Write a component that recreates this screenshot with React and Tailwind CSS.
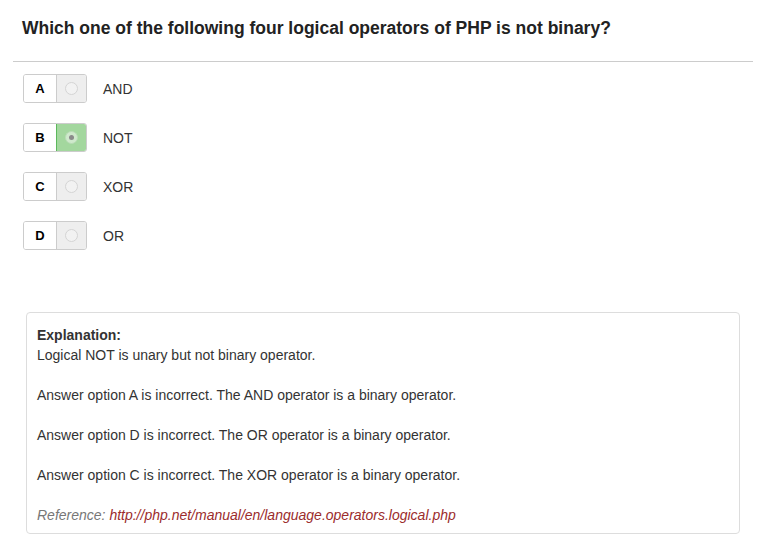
import { useState } from "react"

const options = [
  { key: "A", label: "AND" },
  { key: "B", label: "NOT" },
  { key: "C", label: "XOR" },
  { key: "D", label: "OR" },
]

export default function App() {
  const [picked, setPicked] = useState("B")

  return (
    <div className="min-h-screen bg-white text-[#333] font-['Liberation_Sans',Arial,sans-serif] text-[14px] leading-[20px]">
      {/* QUESTION */}
      <div className="px-[22px] pt-[17px] pb-[22px]">
        <h1 className="text-[17.5px] leading-[22px] font-bold text-[#222]">
          Which one of the following four logical operators of PHP is not binary?
        </h1>
      </div>
      <div className="mx-[13px] w-[740px] border-t border-[#ccc]" />

      {/* OPTIONS */}
      <div className="pl-[23px] pt-[12px] flex flex-col gap-[20px]">
        {options.map((o) => (
          <div key={o.key} className="flex items-center h-[29px]">
            <div
              onClick={() => setPicked(o.key)}
              className="flex h-[29px] cursor-pointer rounded-[3px] border border-[#ccc] overflow-hidden"
            >
              <div className="w-[32px] flex items-center justify-center bg-white text-[13px] font-bold text-black">
                {o.key}
              </div>
              <div
                className={`w-[30px] flex items-center justify-center border-l ${
                  picked === o.key
                    ? "bg-[#a3d79e] border-[#5cb85c]"
                    : "bg-[#eee] border-[#ccc]"
                }`}
              >
                <span
                  className={`w-[13px] h-[13px] rounded-full border flex items-center justify-center ${
                    picked === o.key ? "border-[#b9dcb6] bg-[#cfe9cc]" : "border-[#d4d4d4] bg-[#f2f2f2]"
                  }`}
                >
                  {picked === o.key && <span className="w-[5px] h-[5px] rounded-full bg-[#8a8a8a]" />}
                </span>
              </div>
            </div>
            <span className="ml-[16px] text-[14px] text-[#333]">{o.label}</span>
          </div>
        ))}
      </div>

      {/* EXPLANATION */}
      <div className="ml-[26px] mt-[62px] w-[714px] h-[222px] rounded-[4px] border border-[#ddd] px-[10px] pt-[12px]">
        <div className="font-bold">Explanation:</div>
        <div>Logical NOT is unary but not binary operator.</div>
        <br />
        <div>Answer option A is incorrect. The AND operator is a binary operator.</div>
        <br />
        <div>Answer option D is incorrect. The OR operator is a binary operator.</div>
        <br />
        <div>Answer option C is incorrect. The XOR operator is a binary operator.</div>
        <br />
        <div className="italic text-[#777]">
          Reference: <span className="text-[#9b2c2c]">http://php.net/manual/en/language.operators.logical.php</span>
        </div>
      </div>
    </div>
  )
}
